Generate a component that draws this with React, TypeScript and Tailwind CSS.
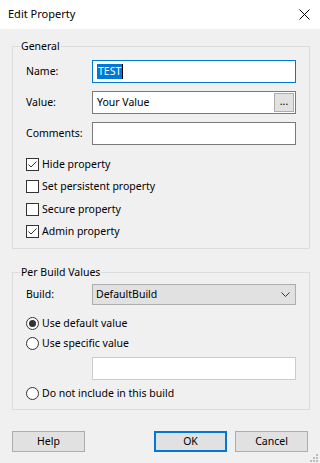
import React from "react";

const font = { fontFamily: '"Noto Sans", Arial, sans-serif' };

function Check({ checked, label }: { checked?: boolean; label: string }) {
  return (
    <div className="h-[22px] flex items-center">
      <div className="w-[13px] h-[13px] border border-[#333333] bg-white flex items-center justify-center">
        {checked && (
          <svg width="11" height="11" viewBox="0 0 11 11">
            <path d="M1.5 5.5 L4 8 L9.5 2.5" fill="none" stroke="#333" strokeWidth="1" />
          </svg>
        )}
      </div>
      <span className="ml-[3px] text-black leading-none">{label}</span>
    </div>
  );
}

function Radio({ checked, label }: { checked?: boolean; label: string }) {
  return (
    <div className="h-[20px] flex items-center">
      <div className="w-[13px] h-[13px] rounded-full border border-[#333333] bg-white flex items-center justify-center">
        {checked && <div className="w-[7px] h-[7px] rounded-full bg-[#333333]" />}
      </div>
      <span className="ml-[3px] text-black leading-none">{label}</span>
    </div>
  );
}

export default function App() {
  return (
    <div className="w-[320px] h-[463px] bg-[#f0f0f0] flex flex-col relative overflow-hidden text-[10.5px]" style={font}>
      <div className="h-[29px] bg-white flex items-center justify-between pl-[8px] pr-[10px]">
        <span className="text-[11px] text-black">Edit Property</span>
        <svg width="11" height="11" viewBox="0 0 11 11">
          <path d="M0.5 0.5 L10.5 10.5 M10.5 0.5 L0.5 10.5" stroke="#000" strokeWidth="1" />
        </svg>
      </div>

      <fieldset className="mt-[9px] ml-[12px] w-[298px] border border-[#dcdcdc] pl-[13px] pr-[13px] pt-[6px] pb-[6px]">
        <legend className="-ml-[6px] px-[1px] leading-[16px] text-black">General</legend>
        <div className="flex items-center h-[23px]">
          <span className="w-[66px] text-black">Name:</span>
          <div className="w-[204px] h-[23px] border border-[#0078d7] bg-white flex items-center pl-[4px]">
            <span className="bg-[#0078d7] text-white leading-[15px] px-[1px]">TEST</span>
            <span className="w-[1px] h-[15px] bg-black" />
          </div>
        </div>
        <div className="flex items-center h-[23px] mt-[8px]">
          <span className="w-[66px] text-black">Value:</span>
          <div className="w-[204px] h-[23px] border border-[#7a7a7a] bg-white flex items-center pl-[4px] pr-[1px]">
            <span className="flex-1 text-black">Your Value</span>
            <div className="w-[20px] h-[19px] border border-[#adadad] bg-[#e1e1e1] flex items-center justify-center leading-none text-black pb-[2px]">
              ...
            </div>
          </div>
        </div>
        <div className="flex items-center h-[23px] mt-[8px]">
          <span className="w-[66px] text-black">Comments:</span>
          <div className="w-[204px] h-[23px] border border-[#7a7a7a] bg-white" />
        </div>
        <div className="mt-[8px] flex flex-col">
          <Check checked label="Hide property" />
          <Check label="Set persistent property" />
          <div className="mt-[1px]">
            <Check label="Secure property" />
          </div>
          <Check checked label="Admin property" />
        </div>
      </fieldset>

      <fieldset className="mt-[15px] ml-[12px] w-[298px] border border-[#dcdcdc] pl-[13px] pr-[13px] pt-[4px] pb-[6px]">
        <legend className="-ml-[6px] px-[1px] leading-[16px] text-black">Per Build Values</legend>
        <div className="flex items-center h-[21px]">
          <span className="w-[66px] text-black">Build:</span>
          <div className="w-[204px] h-[21px] border border-[#adadad] bg-[#e1e1e1] flex items-center pl-[3px] pr-[5px]">
            <span className="flex-1 text-black">DefaultBuild</span>
            <svg width="9" height="5" viewBox="0 0 9 5">
              <path d="M0.5 0.5 L4.5 4.5 L8.5 0.5" fill="none" stroke="#333" strokeWidth="1" />
            </svg>
          </div>
        </div>
        <div className="mt-[8px]">
          <Radio checked label="Use default value" />
          <Radio label="Use specific value" />
        </div>
        <div className="flex mt-[4px]">
          <div className="w-[66px]" />
          <div className="w-[204px] h-[23px] border border-[#cccccc] bg-white" />
        </div>
        <div className="mt-[3px]">
          <Radio label="Do not include in this build" />
        </div>
      </fieldset>

      <div className="mt-[21px] flex items-center px-[12px]">
        <button className="w-[73px] h-[21px] border border-[#adadad] bg-[#e1e1e1] text-black leading-none">Help</button>
        <div className="flex-1" />
        <button className="w-[73px] h-[21px] border-2 border-[#0078d7] bg-[#e1e1e1] text-black leading-none">OK</button>
        <button className="ml-[8px] w-[73px] h-[21px] border border-[#adadad] bg-[#e1e1e1] text-black leading-none">Cancel</button>
      </div>

      <svg className="absolute right-[2px] bottom-[1px]" width="8" height="8" viewBox="0 0 8 8">
        <rect x="6" y="0" width="2" height="2" fill="#bcbcbc" />
        <rect x="3" y="3" width="2" height="2" fill="#bcbcbc" />
        <rect x="6" y="3" width="2" height="2" fill="#bcbcbc" />
        <rect x="0" y="6" width="2" height="2" fill="#bcbcbc" />
        <rect x="3" y="6" width="2" height="2" fill="#bcbcbc" />
        <rect x="6" y="6" width="2" height="2" fill="#bcbcbc" />
      </svg>
    </div>
  );
}
